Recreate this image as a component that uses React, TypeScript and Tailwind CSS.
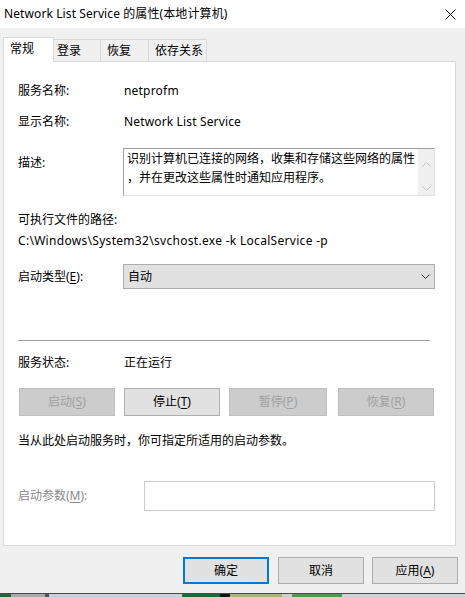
import type { ReactNode } from "react"

const K = ({ c }: { c: string }) => <span className="underline underline-offset-[2px] decoration-1">{c}</span>

function Btn({ children, w, disabled, className = "" }: { children: ReactNode; w: string; disabled?: boolean; className?: string }) {
  return (
    <div
      className={`${w} ${className} h-[28px] flex items-center justify-center border ${
        disabled ? "bg-[#cccccc] border-[#bfbfbf] text-[#a0a0a0]" : "bg-[#e1e1e1] border-[#adadad] text-black"
      }`}
    >
      {children}
    </div>
  )
}

function Chevron({ up, color }: { up?: boolean; color: string }) {
  return (
    <svg width="9" height="5" viewBox="0 0 9 5" fill="none">
      <path d={up ? "M0.5 4.5 L4.5 0.5 L8.5 4.5" : "M0.5 0.5 L4.5 4.5 L8.5 0.5"} stroke={color} strokeWidth="1" />
    </svg>
  )
}

export default function App() {
  return (
    <div className="w-[465px] h-[597px] bg-[#f0f0f0] flex flex-col text-[12px] leading-[16px] text-black font-['Noto_Sans','Noto_Sans_CJK_SC',sans-serif]">
      {/* title bar */}
      <div className="h-[28px] bg-white flex items-center justify-between pl-[4px] pr-[9px]">
        <span className="tracking-[0.1px]">Network List Service 的属性(本地计算机)</span>
        <svg width="11" height="11" viewBox="0 0 11 11">
          <path d="M0.5 0.5 L10.5 10.5 M10.5 0.5 L0.5 10.5" stroke="#000" strokeWidth="1" />
        </svg>
      </div>

      {/* tabs */}
      <div className="h-[33px] flex items-end pl-[3px]">
        <div className="relative z-10 -mb-px w-[51px] h-[25px] bg-white border border-b-0 border-[#d9d9d9] pl-[6px] pt-[3px]">常规</div>
        <div className="w-[47px] h-[22px] border border-b-0 border-l-0 border-[#d9d9d9] pl-[3px] pt-[3px]">登录</div>
        <div className="w-[48px] h-[22px] border border-b-0 border-l-0 border-[#d9d9d9] pl-[6px] pt-[3px]">恢复</div>
        <div className="w-[58px] h-[22px] border border-b-0 border-l-0 border-[#d9d9d9] pl-[6px] pt-[3px]">依存关系</div>
      </div>

      {/* panel */}
      <div className="mx-[3px] w-[453px] h-[485px] bg-white border border-[#d9d9d9] pl-[14px] pt-[21px] flex flex-col">
        <div className="flex h-[16px]">
          <span className="w-[106px]">服务名称:</span>
          <span className="tracking-[0.2px]">netprofm</span>
        </div>
        <div className="flex h-[16px] mt-[15px]">
          <span className="w-[106px]">显示名称:</span>
          <span className="tracking-[0.15px]">Network List Service</span>
        </div>

        <div className="flex mt-[18px]">
          <span className="w-[105px] pt-[7px]">描述:</span>
          <div className="w-[312px] h-[48px] border border-[#a0a0a0] border-r-[#e3e3e3] border-b-[#e3e3e3] flex">
            <div className="flex-1 pl-[3px] leading-[19px]">
              <div>识别计算机已连接的网络，收集和存储这些网络的属性</div>
              <div>，并在更改这些属性时通知应用程序。</div>
            </div>
            <div className="w-[16px] bg-[#f0f0f0] flex flex-col items-center justify-between pt-[13px] pb-[4px]">
              <Chevron up color="#c2c2c2" />
              <Chevron color="#c2c2c2" />
            </div>
          </div>
        </div>

        <div className="h-[16px] mt-[16px]">可执行文件的路径:</div>
        <div className="h-[16px] mt-[5px] tracking-[0.3px]">C:\Windows\System32\svchost.exe -k LocalService -p</div>

        <div className="flex items-center mt-[15px]">
          <span className="w-[105px]">
            启动类型(<K c="E" />):
          </span>
          <div className="w-[312px] h-[25px] bg-[#e1e1e1] border border-[#adadad] flex items-center justify-between pl-[4px] pr-[4px]">
            <span>自动</span>
            <Chevron color="#333333" />
          </div>
        </div>

        <div className="mt-[51px] w-[412px] h-px bg-[#a0a0a0]" />

        <div className="flex h-[16px] mt-[14px]">
          <span className="w-[106px]">服务状态:</span>
          <span>正在运行</span>
        </div>

        <div className="flex mt-[17px]">
          <Btn w="w-[96px]" className="ml-[1px]" disabled>
            启动(<K c="S" />)
          </Btn>
          <Btn w="w-[96px]" className="ml-[9px]">
            停止(<K c="T" />)
          </Btn>
          <Btn w="w-[98px]" className="ml-[9px]" disabled>
            暂停(<K c="P" />)
          </Btn>
          <Btn w="w-[96px]" className="ml-[11px]" disabled>
            恢复(<K c="R" />)
          </Btn>
        </div>

        <div className="h-[16px] mt-[17px]">当从此处启动服务时，你可指定所适用的启动参数。</div>

        <div className="flex items-center mt-[32px]">
          <span className="w-[126px] text-[#8a8a8a]">
            启动参数(<K c="M" />):
          </span>
          <div className="w-[291px] h-[30px] bg-white border border-[#cccccc]" />
        </div>
      </div>

      {/* dialog buttons */}
      <div className="flex mt-[11px] pl-[183px]">
        <div className="w-[86px] h-[27px] bg-[#e1e1e1] border-2 border-[#0078d7] flex items-center justify-center">确定</div>
        <div className="w-[86px] h-[27px] ml-[9px] bg-[#e1e1e1] border border-[#adadad] flex items-center justify-center">取消</div>
        <div className="w-[86px] h-[27px] ml-[8px] bg-[#e1e1e1] border border-[#adadad] flex items-center justify-center">
          应用(<K c="A" />)
        </div>
      </div>

      {/* taskbar peeking below */}
      <div className="mt-auto h-[4px] flex flex-col">
        <div className="h-px bg-[#4a4a4a]" />
        <div className="flex-1 flex bg-[#cfd3d6]">
          <div className="w-[11px] bg-[#1d6b3a]" />
          <div className="w-[34px] bg-[#a9a9a9]" />
          <div className="w-[4px] bg-[#555555]" />
          <div className="w-[133px] bg-[#c8d0dc]" />
          <div className="w-[38px] bg-[#16703a]" />
          <div className="w-[10px] bg-[#111111]" />
          <div className="w-[52px] bg-[#a9b47a]" />
          <div className="w-[10px] bg-[#d0d0d0]" />
          <div className="w-[50px] bg-[#4c9e4c]" />
        </div>
      </div>
    </div>
  )
}
